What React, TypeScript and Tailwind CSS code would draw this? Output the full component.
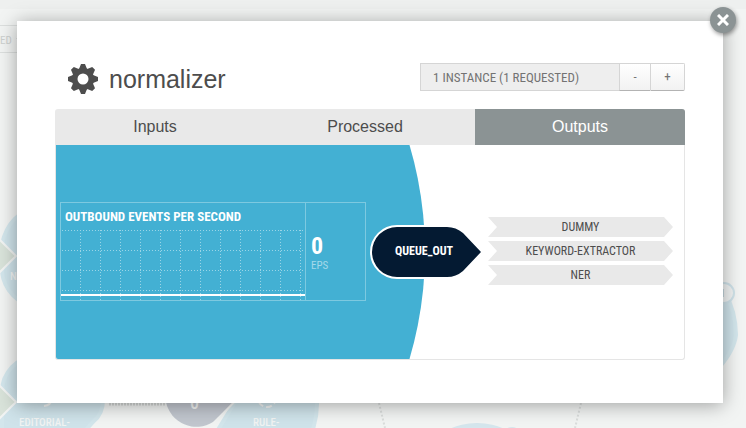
import { useState } from "react";

const NARROW = "font-['Roboto_Condensed',Roboto,'Liberation_Sans',sans-serif]";

const tabs = [
  { name: "Inputs", width: "w-[200px]" },
  { name: "Processed", width: "w-[220px]" },
  { name: "Outputs", width: "flex-1" },
];

const consumers = ["DUMMY", "KEYWORD-EXTRACTOR", "NER"];

function Backdrop() {
  return (
    <svg
      className={`absolute inset-0 h-full w-full text-[11px] font-medium ${NARROW}`}
      aria-hidden="true"
    >
      <rect width="100%" height="9" fill="#eef0ef" />
      <path d="M0 25.500H60M0 52.500H60" stroke="#dcdfde" />
      <text x="0" y="44" fill="#cdd0cf" fontWeight="400">ED</text>
      <path d="M16 38h6l-3 3z" fill="#d2d5d4" />
      <g strokeWidth="4" fill="#cfe3ea" stroke="#d3e6ec">
        <path d="M36 210A34 49 0 0 0 2 244V272A40 40 0 0 0 36 307H90V210Z" />
        <path d="M36 356A36 36 0 0 0 2 392V432H84L93 422Q103 414 103 400V356Z" />
        <path d="M219 428L262 358H300Q317 380 317 404Q317 418 312 432H222Z" />
        <path d="M700 290H724Q736 312 736 335Q734 352 715 372" />
      </g>
      <circle cx="724" cy="293" r="10" fill="#f0f3f3" stroke="#cfe2e9" strokeWidth="2" />
      <path d="M723 289V297" stroke="#c6d8df" strokeWidth="2" />
      <g fill="#d9e3da" stroke="#f2f4f3" strokeWidth="2">
        <path d="M-12 228L16 256L-12 284Z" />
        <path d="M-12 374L16 402L-12 430Z" />
      </g>
      <path d="M166 402A31 31 0 0 0 213 422L240 396H166Z" fill="#c1c6ce" />
      <path d="M213 424L240 396" stroke="#f2f4f3" strokeWidth="2" />
      <path d="M109 404H165" stroke="#d3d6d5" strokeWidth="3" strokeDasharray="2 1" />
      <circle cx="267" cy="398" r="9" fill="none" stroke="#f2f4f3" strokeWidth="2" strokeDasharray="6 3" />
      <path d="M44 406Q51 405 52 399" fill="none" stroke="#f2f4f3" strokeWidth="2" />
      <path d="M379 403L385 428M581 403L575 428" stroke="#dadddc" strokeWidth="2" strokeDasharray="2 2" />
      <ellipse cx="477" cy="445" rx="40" ry="22" fill="#d5e6ed" />
      <circle cx="512" cy="437" r="10" fill="#d5e6ed" />
      <g fill="#f2f4f3">
        <text x="10" y="280">N</text>
        <text x="19" y="426">EDITORIAL-</text>
        <text x="253" y="426">RULE-</text>
        <text x="190" y="409" fontSize="18">0</text>
      </g>
    </svg>
  );
}

function Gear() {
  return (
    <svg className="h-[30px] w-[30px]" viewBox="-15 -15 30 30" fill="#4d4d4d" aria-hidden="true">
      {[0, 45, 90, 135].map((a) => (
        <path
          key={a}
          d="M-2 -15H2L4 -10V10L2 15H-2L-4 10V-10Z"
          transform={`rotate(${a})`}
        />
      ))}
      <circle r="11" />
      <circle r="5.500" fill="#fff" />
    </svg>
  );
}

function RateChart() {
  const columns = Array.from({ length: 12 }, (_, i) => 19 + i * 20);
  const rows = [0, 20, 40, 60];
  return (
    <section className={`flex h-[99px] w-[306px] border border-[#7dc9e0] text-white ${NARROW}`}>
      <div className="flex flex-1 flex-col">
        <h2 className="h-[27px] pl-1 text-[13px] leading-[28px] font-bold whitespace-nowrap">
          OUTBOUND EVENTS PER SECOND
        </h2>
        <svg className="h-[70px] w-full" role="img" aria-label="Event rate">
          <g stroke="#9ad5e7" strokeDasharray="1 2" shapeRendering="crispEdges">
            {rows.map((y) => (
              <path key={y} d={`M1 ${y + 0.5}H244`} />
            ))}
            {columns.map((x) => (
              <path key={x} d={`M${x + 0.5} 0V70`} />
            ))}
          </g>
          <path d="M0 65H244" stroke="#fff" strokeWidth="2" />
        </svg>
      </div>
      <div className="w-[60px] border-l border-[#7dc9e0] pt-[30px] pl-[5px]">
        <div className="text-[24px] leading-[27px] font-bold">0</div>
        <div className="text-[11px] leading-3 text-[#a5d9e9]">EPS</div>
      </div>
    </section>
  );
}

function QueueNode() {
  return (
    <div className="relative ml-1 h-[56px] w-[112px]">
      <svg className="absolute inset-0 h-full w-full" viewBox="0 0 112 56" aria-hidden="true">
        <path
          d="M27 4H77Q86 4 93 10L111 29L93 48Q86 54 77 54H27A25 25 0 0 1 27 4Z"
          fill="#041a32"
          stroke="#fff"
          strokeWidth="4"
          style={{ paintOrder: "stroke" }}
        />
      </svg>
      <span className={`relative block pr-1 text-center text-[12px] leading-[56px] font-bold text-white ${NARROW}`}>
        QUEUE_OUT
      </span>
    </div>
  );
}

export default function App() {
  const [requested, setRequested] = useState(1);
  const [active, setActive] = useState("Outputs");

  return (
    <div className="relative min-h-screen overflow-hidden bg-[#f2f4f3] pt-[21px] pr-[23px] pb-[25px] pl-[17px] font-['Liberation_Sans',Arial,sans-serif]">
      <Backdrop />
      <main
        role="dialog"
        aria-label="normalizer"
        className="relative bg-white px-[38px] pt-[42px] pb-[43px] shadow-[0_2px_18px_rgba(0,0,0,0.35)]"
      >
        <button
          aria-label="Close"
          className="absolute -top-[14px] -right-[13px] flex h-[26px] w-[26px] items-center justify-center rounded-full bg-[#8b9394] shadow-[1px_2px_4px_rgba(0,0,0,0.4)]"
        >
          <svg className="h-3 w-3" viewBox="0 0 12 12" stroke="#fff" strokeWidth="3">
            <path d="M1 1L11 11M11 1L1 11" />
          </svg>
        </button>

        <header className="flex items-start justify-between">
          <div className="flex items-center gap-[11px] pl-[13px]">
            <Gear />
            <h1 className="text-[25px] leading-[32px] text-[#4d4d4d]">normalizer</h1>
          </div>
          <div className={`flex h-7 text-[13px] text-[#737373] ${NARROW}`}>
            <span className="w-[199px] border border-r-0 border-[#d5d5d5] bg-[#eeeeee] pl-3 leading-[27px]">
              1 INSTANCE ({requested} REQUESTED)
            </span>
            <button
              aria-label="Fewer instances"
              onClick={() => setRequested(Math.max(1, requested - 1))}
              className="w-[31px] border border-r-0 border-[#d5d5d5] border-b-[#b3b3b3] bg-linear-to-b from-white to-[#f2f2f2]"
            >
              -
            </button>
            <button
              aria-label="More instances"
              onClick={() => setRequested(requested + 1)}
              className="w-[35px] rounded-r-xs border border-[#d5d5d5] border-b-[#b3b3b3] bg-linear-to-b from-white to-[#f2f2f2]"
            >
              +
            </button>
          </div>
        </header>

        <div role="tablist" className="mt-[14px] flex h-9 overflow-hidden rounded-t-[3px] bg-[#e9e9e9]">
          {tabs.map((tab) => (
            <button
              key={tab.name}
              role="tab"
              aria-selected={active === tab.name}
              onClick={() => setActive(tab.name)}
              className={`${tab.width} text-[16px] ${
                active === tab.name ? "bg-[#8b9394] text-white" : "text-[#4d4d4d]"
              }`}
            >
              {tab.name}
            </button>
          ))}
        </div>

        <div
          role="tabpanel"
          className="relative flex h-[215px] items-center overflow-hidden rounded-b-[3px] border border-t-0 border-[#e5e5e5] pb-[2px] pl-1"
        >
          <svg className="absolute inset-0 h-full w-full" aria-hidden="true">
            <circle cx="-8" cy="107" r="377" fill="#43b0d3" />
          </svg>
          <div className="relative flex flex-1 items-center">
            <RateChart />
            <QueueNode />
            <ul className={`ml-[6px] flex w-[185px] flex-col gap-1 text-[12px] text-[#4d4d4d] ${NARROW}`}>
              {consumers.map((name) => (
                <li
                  key={name}
                  className="h-5 bg-[#e9e9e9] text-center leading-5 [clip-path:polygon(0_0,176px_0,100%_50%,176px_100%,0_100%,9px_50%)]"
                >
                  {name}
                </li>
              ))}
            </ul>
          </div>
        </div>
      </main>
    </div>
  );
}
